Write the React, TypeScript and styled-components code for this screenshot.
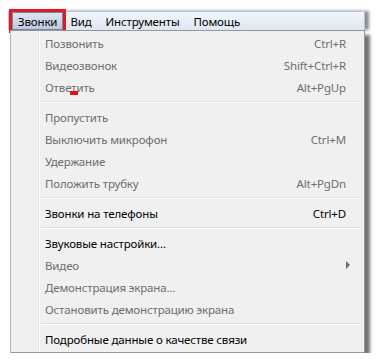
import React from "react";
import styled, { createGlobalStyle } from "styled-components";

const Global = createGlobalStyle`
  html, body { margin: 0; padding: 0; background: #ffffff; }
  body { font-family: "Noto Sans", "Open Sans", sans-serif; font-size: 11.5px; letter-spacing: -0.15px; }
`;

const Frame = styled.div`
  width: 357px;
  margin: 11px 0 0 8px;
  display: flex;
  flex-direction: column;
`;

const MenuBar = styled.div`
  height: 18px;
  display: flex;
  align-items: stretch;
  background: linear-gradient(#f2f6fb, #dde6f2);
  border: 1px solid #b9c4d4;
  border-bottom: none;
  box-shadow: 4px 0 3px rgba(0, 0, 0, 0.45);
  padding-left: 3px;
`;

const BarItem = styled.div<{ $active?: boolean }>`
  display: flex;
  align-items: center;
  padding: 0 7px;
  color: #000;
  ${(p) =>
    p.$active &&
    `
    padding: 0 6px;
    background: linear-gradient(#dde6f3, #b9c7de);
    outline: 3px solid #de1b22;
    box-shadow: inset 0 0 0 1px #7b8798;
  `}
`;

const Panel = styled.div`
  background: #f0f0f0;
  border: 1px solid #979797;
  border-left-color: #b5b5b5;
  margin-left: 2px;
  box-shadow: 5px 5px 3px rgba(0, 0, 0, 0.55);
  padding: 1px 0 2px 0;
  position: relative;
  display: flex;
  flex-direction: column;
  &::before {
    content: "";
    position: absolute;
    top: 0;
    bottom: 0;
    left: 27px;
    width: 1px;
    background: #e2e3e3;
    box-shadow: 1px 0 0 #ffffff;
  }
`;

const Row = styled.div<{ $disabled?: boolean }>`
  height: 22px;
  display: grid;
  grid-template-columns: 1fr auto;
  align-items: center;
  padding: 0 18px 0 34px;
  color: ${(p) => (p.$disabled ? "#6d6d6d" : "#000000")};
  position: relative;
`;

const Shortcut = styled.span`
  text-align: right;
`;

const Separator = styled.div`
  height: 1px;
  margin: 3px 4px 3px 30px;
  background: #e0e0e0;
  border-bottom: 1px solid #ffffff;
`;

const Arrow = styled.span`
  width: 0;
  height: 0;
  border-top: 4px solid transparent;
  border-bottom: 4px solid transparent;
  border-left: 4px solid #6d6d6d;
  margin-right: -8px;
`;

const Marker = styled.span`
  position: absolute;
  left: 59px;
  top: 15px;
  width: 8px;
  height: 4px;
  background: #e01010;
`;

type Item =
  | { sep: true }
  | { label: string; key?: string; disabled?: boolean; sub?: boolean; mark?: boolean };

const items: Item[] = [
  { label: "Позвонить", key: "Ctrl+R", disabled: true },
  { label: "Видеозвонок", key: "Shift+Ctrl+R", disabled: true },
  { label: "Ответить", key: "Alt+PgUp", disabled: true, mark: true },
  { sep: true },
  { label: "Пропустить", disabled: true },
  { label: "Выключить микрофон", key: "Ctrl+M", disabled: true },
  { label: "Удержание", disabled: true },
  { label: "Положить трубку", key: "Alt+PgDn", disabled: true },
  { sep: true },
  { label: "Звонки на телефоны", key: "Ctrl+D" },
  { sep: true },
  { label: "Звуковые настройки..." },
  { label: "Видео", disabled: true, sub: true },
  { label: "Демонстрация экрана...", disabled: true },
  { label: "Остановить демонстрацию экрана", disabled: true },
  { sep: true },
  { label: "Подробные данные о качестве связи" },
];

export default function App() {
  return (
    <>
      <Global />
      <Frame>
        <MenuBar>
          <BarItem $active>Звонки</BarItem>
          <BarItem>Вид</BarItem>
          <BarItem>Инструменты</BarItem>
          <BarItem>Помощь</BarItem>
        </MenuBar>
        <Panel>
          {items.map((it, i) =>
            "sep" in it ? (
              <Separator key={i} />
            ) : (
              <Row key={i} $disabled={it.disabled}>
                <span>{it.label}</span>
                {it.sub ? <Arrow /> : <Shortcut>{it.key ?? ""}</Shortcut>}
                {it.mark && <Marker />}
              </Row>
            )
          )}
        </Panel>
      </Frame>
    </>
  );
}
